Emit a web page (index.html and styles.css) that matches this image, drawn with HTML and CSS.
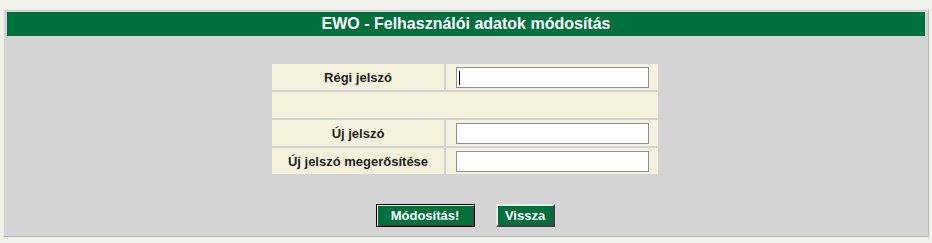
FILE: index.html
```html
<!DOCTYPE html>
<html lang="hu">
<head>
<meta charset="utf-8">
<title>EWO - Felhasználói adatok módosítás</title>
<link rel="stylesheet" href="styles.css">
</head>
<body>
<div class="panel">
  <div class="header">EWO - Felhasználói adatok módosítás</div>
  <form class="form">
    <table class="grid">
      <tr>
        <td class="label">Régi jelszó</td>
        <td class="value"><input class="field field-focus" type="password"></td>
      </tr>
      <tr>
        <td class="blank" colspan="2"></td>
      </tr>
      <tr>
        <td class="label">Új jelszó</td>
        <td class="value"><input class="field" type="password"></td>
      </tr>
      <tr>
        <td class="label">Új jelszó megerősítése</td>
        <td class="value"><input class="field" type="password"></td>
      </tr>
    </table>
    <div class="actions">
      <button type="button" class="btn btn-default">Módosítás!</button>
      <button type="button" class="btn btn-back">Vissza</button>
    </div>
  </form>
</div>
</body>
</html>
```
FILE: styles.css
```css
html, body {
  margin: 0;
  padding: 0;
}
body {
  background: #f1f1ec;
  font-family: "Liberation Sans", Arial, sans-serif;
  height: 243px;
  overflow: hidden;
}
.panel {
  margin: 9px 3px 0 3px;
  background: #d4d4d4;
  border-top: 1px solid #ebebe4;
  border-left: 1px solid #ebebe4;
  border-right: 1px solid #b8b8b0;
  border-bottom: 1px solid #b8b8b0;
  padding: 2px 3px 9px 3px;
}
.header {
  background: #00703c;
  color: #ffffff;
  font-weight: bold;
  font-size: 16px;
  height: 24px;
  line-height: 24px;
  text-align: center;
}
.form {
  margin: 0;
  padding-top: 26px;
}
.grid {
  margin: 0 auto;
  border-collapse: separate;
  border-spacing: 2px;
  transform: translateX(-1px);
}
.grid td {
  background: #f4f2dc;
  height: 26px;
  padding: 0;
}
.label {
  width: 172px;
  text-align: center;
  font-weight: bold;
  font-size: 13px;
  color: #1e1e1e;
}
.value {
  width: 212px;
  padding: 0 9px 0 10px !important;
  box-sizing: border-box;
}
.field {
  display: block;
  box-sizing: border-box;
  width: 193px;
  height: 21px;
  margin: 0;
  border: 1px solid #8a9296;
  background: #ffffff;
  padding: 0 2px;
  font-family: "Liberation Sans", Arial, sans-serif;
  font-size: 12px;
}
.field-focus {
  background: linear-gradient(to right, #000 0, #000 1px, transparent 1px) no-repeat 2px 3px / 1px 14px, #ffffff;
}
.actions {
  display: flex;
  justify-content: center;
  gap: 21px;
  margin-top: 28px;
  transform: translateX(-1px);
}
.btn {
  box-sizing: border-box;
  height: 23px;
  margin: 0;
  background: #00703c;
  color: #ffffff;
  font-family: "Liberation Sans", Arial, sans-serif;
  font-weight: bold;
  font-size: 13px;
  border: 2px solid;
  border-color: #e8efe8 #404040 #404040 #e8efe8;
  padding: 0;
  line-height: 17px;
}
.btn-default {
  width: 99px;
  border: 1px solid #000000;
  box-shadow: inset 1px 1px 0 #e8efe8, inset -1px -1px 0 #404040;
}
.btn-back {
  width: 59px;
}
```
